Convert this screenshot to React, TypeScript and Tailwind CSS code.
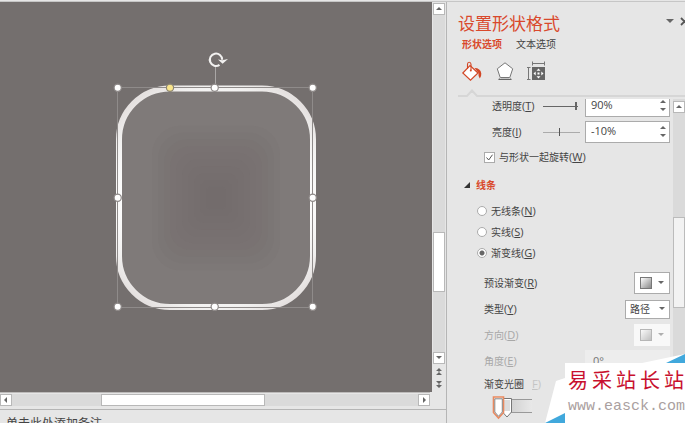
import { useState } from "react";
import type { ReactNode } from "react";

const HANDLES = [
  [118, 88], [215, 88], [313, 88],
  [118, 198], [313, 198],
  [118, 307], [215, 307], [313, 307],
];

// half sizes of the path gradient's steps
const STEPS = [64, 58, 52, 46, 40, 34, 28, 22, 16, 10];

function Arrow({ dir }: { dir: "up" | "down" | "left" | "right" }) {
  const points = {
    up: "0,4 3,1 6,4",
    down: "0,1 6,1 3,4",
    left: "4,0 4,6 1,3",
    right: "2,0 2,6 5,3",
  }[dir];
  return (
    <svg viewBox="0 0 6 6" className="size-1.5 shrink-0">
      <polygon points={points} fill="#666" />
    </svg>
  );
}

function DoubleArrow({ down = false }: { down?: boolean }) {
  return (
    <svg viewBox="0 0 8 8" className={down ? "size-2 rotate-180" : "size-2"}>
      <path d="M1 4 4 1 7 4ZM1 8 4 5 7 8Z" fill="#666" />
      <path d="M4 3V5" stroke="#666" />
    </svg>
  );
}

function ScrollButton({ dir }: { dir: "up" | "down" | "left" | "right" }) {
  return (
    <button
      aria-label={dir}
      className="flex size-3 shrink-0 items-center justify-center border border-[#b8b8b8] bg-white"
    >
      <Arrow dir={dir} />
    </button>
  );
}

function Slide() {
  return (
    <div className="relative min-w-0 flex-1 overflow-hidden bg-[#746f6e]">
      <svg viewBox="110 45 210 270" className="absolute top-[43px] left-[110px] h-[270px] w-[210px]">
        <defs>
          <radialGradient id="line" gradientUnits="userSpaceOnUse" cx="216" cy="198" r="150">
            <stop offset="0.6" stopColor="#fff" />
            <stop offset="0.74" stopColor="#f2f1f0" />
            <stop offset="0.84" stopColor="#e5e1e0" />
          </radialGradient>
        </defs>
        <rect x="119" y="88.5" width="194" height="218.5" rx="51" fill="#7f7a79" />
        {STEPS.map((s) => (
          <rect key={s} x={216 - s} y={198 - s * 1.13} width={s * 2} height={s * 2.26} rx={s * 0.45} fill="#706b6a" opacity="0.12" />
        ))}
        <rect x="119" y="88.5" width="194" height="218.5" rx="51" fill="none" stroke="url(#line)" strokeWidth="6" />
        <rect x="117.5" y="87.5" width="195" height="220" fill="none" stroke="#8f8b8a" />
        <path d="M215.5 67V84" stroke="#aaa7a6" />
        {HANDLES.map(([x, y]) => (
          <circle key={`${x}-${y}`} cx={x - 0.3} cy={y - 0.2} r="3.6" fill="#fff" stroke="#8d8887" strokeWidth="1.2" />
        ))}
        <circle cx="170" cy="87.8" r="3.6" fill="#f9e58c" stroke="#8d8674" strokeWidth="1.2" />
        <path d="M219.5 64.9A6.2 6.2 0 1 1 222.2 59.8" fill="none" stroke="#f2f1f0" strokeWidth="2.1" />
        <path d="M218 59.5 222.3 60.3 228 59 222.6 63.8Z" fill="#f2f1f0" />
      </svg>
    </div>
  );
}

function Editor() {
  return (
    <main className="flex min-w-0 flex-1 flex-col">
      <div className="flex min-h-0 flex-1">
        <Slide />
        <div className="flex w-3.5 flex-col items-center pt-px">
          <ScrollButton dir="up" />
          <div className="flex w-3 flex-1 flex-col bg-[#dadada]">
            <div className="flex-[218]" />
            <div className="flex-[58] border border-[#b8b8b8] bg-white" />
            <div className="flex-[60]" />
          </div>
          <ScrollButton dir="down" />
          <button aria-label="上一张幻灯片" className="flex h-3.5 items-center"><DoubleArrow /></button>
          <button aria-label="下一张幻灯片" className="flex h-3.5 items-center"><DoubleArrow down /></button>
        </div>
      </div>
      <div className="mr-4 flex h-3.5 items-center border-t border-[#bdbbba]">
        <ScrollButton dir="left" />
        <div className="flex h-3 flex-1 bg-[#dadada]">
          <div className="flex-[90]" />
          <div className="flex-[163] border border-[#b8b8b8] bg-white" />
          <div className="flex-[154]" />
        </div>
        <ScrollButton dir="right" />
      </div>
      <div className="mt-[3px] h-3.5 overflow-hidden border-t border-[#b5b5b5] px-1.5 pt-1.5">
        <textarea
          aria-label="备注"
          rows={1}
          placeholder="单击此处添加备注"
          className="block h-4 w-full resize-none overflow-hidden text-[12px] leading-4 outline-none placeholder:text-[#444]"
        />
      </div>
    </main>
  );
}

function Key({ children }: { children: string }) {
  return <span className="text-[11px]">(<u>{children}</u>)</span>;
}

function SpinBox({ id, value }: { id: string; value: string }) {
  return (
    <div className="ml-auto flex h-[22px] w-[85px] border border-[#ababab] bg-white">
      <input id={id} defaultValue={value} className="min-w-0 flex-1 pb-0.5 pl-[5px] text-[11px] outline-none" />
      <div className="flex w-3 flex-col items-center justify-evenly">
        <button aria-label="增加" className="flex"><Arrow dir="up" /></button>
        <button aria-label="减少" className="flex"><Arrow dir="down" /></button>
      </div>
    </div>
  );
}

function Radio({ value, current, onPick, children }: {
  value: string;
  current: string;
  onPick: (v: string) => void;
  children: ReactNode;
}) {
  return (
    <label className="flex h-[21px] items-center gap-1 pl-[30px]">
      <input
        type="radio"
        name="line"
        checked={current === value}
        onChange={() => onPick(value)}
        className="size-2.5 appearance-none rounded-full border border-[#ababab] bg-white checked:bg-[radial-gradient(#666_0_2px,#fff_3px)]"
      />
      <span>{children}</span>
    </label>
  );
}

function Swatch() {
  return (
    <>
      <span className="size-3 border border-[#777] bg-linear-to-br from-white to-[#8a8a8a]" />
      <Arrow dir="down" />
    </>
  );
}

function CategoryIcons() {
  return (
    <div className="mt-[9px] flex h-[22px] items-center gap-[11px] pl-3.5">
      <button aria-label="填充与线条">
        <svg viewBox="0 0 22 22" className="size-[22px]" fill="none" stroke="#d24726">
          <path d="M9 4.5 17 12 9.5 19.2 1.8 12Z" fill="#fff" strokeWidth="1.2" />
          <path d="M6.5 8V3.2Q6.5 1.2 8.2 1.2T10 3.2V9" strokeWidth="1.1" />
          <circle cx="9.8" cy="9.5" r="1" fill="#d24726" stroke="none" />
          <path d="M13.5 7Q19.5 7 20.3 12.5 20.5 15.5 18.8 17.5 17 15 17.5 12Z" fill="#d24726" stroke="none" />
        </svg>
      </button>
      <button aria-label="效果">
        <svg viewBox="0 0 22 22" className="size-[22px]" fill="none" stroke="#777">
          <path d="M11 1.8 18.7 7.8 15.8 16.5H6.2L3.3 7.8Z" fill="#fff" />
          <path d="M6.5 17.5H15.5" stroke="#c4c4c4" />
          <path d="M4.5 18.5H17.5" stroke="#666" />
          <path d="M6.2 16.5 4.5 18.5M15.8 16.5 17.5 18.5" stroke="#999" />
        </svg>
      </button>
      <button aria-label="大小与属性">
        <svg viewBox="0 0 22 22" className="size-[22px]" fill="none" stroke="#777">
          <path d="M5.5 2.5H17.5M5.5 0.5V4.5M17.5 0.5V4.5M1.5 6.5V18.5M0 6.5H3.5M0 18.5H3.5" />
          <rect x="5" y="6" width="13" height="13" fill="#666" stroke="none" />
          <path d="M11.5 7.5 13.5 9.7H9.5ZM11.5 17.5 13.5 15.3H9.5ZM6.5 12.5 8.7 10.5V14.5ZM16.5 12.5 14.3 10.5V14.5ZM10.5 11.5H12.5V13.5H10.5Z" fill="#fff" stroke="none" />
        </svg>
      </button>
    </div>
  );
}

function FormatPane() {
  const [line, setLine] = useState("gradient");

  return (
    <aside className="flex w-[239px] shrink-0 flex-col overflow-hidden border-l border-[#b5b5b5]">
      <header className="flex items-center pt-2.5 pl-[11px]">
        <h1 className="flex-1 text-[17px] leading-6 text-[#d9492c]">设置形状格式</h1>
        <button aria-label="窗格选项" className="mr-1.5 -mt-1.5">
          <svg viewBox="0 0 8 4" className="h-1 w-2"><path d="M0 0H8L4 4Z" fill="#666" /></svg>
        </button>
        <button aria-label="关闭" className="-mr-1 -mt-1.5">
          <svg viewBox="0 0 9 9" className="size-[9px]"><path d="M1 1 8 8M8 1 1 8" stroke="#555" strokeWidth="1.8" /></svg>
        </button>
      </header>
      <nav className="flex h-4 items-center gap-3.5 pl-[15px]">
        <button className="font-bold text-[#d9492c]">形状选项</button>
        <button>文本选项</button>
      </nav>
      <CategoryIcons />
      <div className="mt-1.5 flex h-2 items-end pl-[11px]">
        <div className="w-2 border-t-2 border-[#d6d6d6]" />
        <svg viewBox="0 0 12 8" className="h-2 w-3"><path d="M0 7H1L6 1.5 11 7H12" fill="none" stroke="#d6d6d6" strokeWidth="2" /></svg>
        <div className="flex-1 border-t-2 border-[#d6d6d6]" />
      </div>

      <div className="mt-0.5 flex min-h-0 flex-1 overflow-hidden">
        <div className="min-w-0 flex-1 overflow-hidden pr-[3px]">
          <div className="-mt-1.5 flex h-[26px] items-center pl-[45px]">
            <label htmlFor="alpha" className="w-[51px]">透明度<Key>T</Key></label>
            <input
              type="range"
              aria-label="透明度"
              defaultValue={90}
              className="h-2 w-[37px] appearance-none bg-[linear-gradient(#666,#666)] bg-size-[35px_1px] bg-left bg-no-repeat [&::-webkit-slider-thumb]:h-2 [&::-webkit-slider-thumb]:w-0.5 [&::-webkit-slider-thumb]:appearance-none [&::-webkit-slider-thumb]:bg-[#666]"
            />
            <SpinBox id="alpha" value="90%" />
          </div>
          <div className="flex h-[26px] items-center pl-[45px]">
            <label htmlFor="bright" className="w-[51px]">亮度<Key>I</Key></label>
            <input
              type="range"
              aria-label="亮度"
              min={-100}
              max={100}
              defaultValue={-10}
              className="h-2 w-[37px] appearance-none bg-[linear-gradient(#ababab,#ababab)] bg-size-[37px_1px] bg-left bg-no-repeat [&::-webkit-slider-thumb]:h-2 [&::-webkit-slider-thumb]:w-px [&::-webkit-slider-thumb]:appearance-none [&::-webkit-slider-thumb]:bg-[#555]"
            />
            <SpinBox id="bright" value="-10%" />
          </div>
          <label className="flex h-6 items-center gap-1 pl-[37px]">
            <span className="grid size-[11px] place-items-center">
              <input type="checkbox" defaultChecked className="col-start-1 row-start-1 size-[11px] appearance-none border border-[#ababab] bg-white" />
              <svg viewBox="0 0 11 11" className="pointer-events-none col-start-1 row-start-1 size-[11px]">
                <path d="M2.5 5.5 4.7 8 8.5 2.7" fill="none" stroke="#555" />
              </svg>
            </span>
            <span>与形状一起旋转<Key>W</Key></span>
          </label>
          <h2 className="flex h-[31px] items-center gap-1.5 pl-[17px] font-bold text-[#d9492c]">
            <svg viewBox="0 0 6 6" className="size-1.5"><path d="M6 0V6H0Z" fill="#333" /></svg>
            线条
          </h2>
          <Radio value="none" current={line} onPick={setLine}>无线条<Key>N</Key></Radio>
          <Radio value="solid" current={line} onPick={setLine}>实线<Key>S</Key></Radio>
          <Radio value="gradient" current={line} onPick={setLine}>渐变线<Key>G</Key></Radio>

          <div className="mt-[7px] flex h-[26px] items-center justify-between pl-[37px]">
            <span>预设渐变<Key>R</Key></span>
            <button aria-label="预设渐变" className="flex h-[22px] w-9 items-center justify-center gap-1.5 border border-[#ababab] bg-white">
              <Swatch />
            </button>
          </div>
          <div className="flex h-[26px] items-center justify-between pl-[37px]">
            <label htmlFor="type">类型<Key>Y</Key></label>
            <div className="grid h-[19px] w-[45px] items-center border border-[#ababab] bg-white">
              <select id="type" className="col-start-1 row-start-1 h-full w-full appearance-none pb-px pl-1 outline-none">
                <option>路径</option>
                <option>线性</option>
                <option>射线</option>
              </select>
              <span className="pointer-events-none col-start-1 row-start-1 mr-1 justify-self-end"><Arrow dir="down" /></span>
            </div>
          </div>
          <div className="flex h-[26px] items-center justify-between pl-[37px] text-[#a8a8a8]">
            <span>方向<Key>D</Key></span>
            <button disabled aria-label="方向" className="flex h-[22px] w-9 items-center justify-center gap-1.5 bg-[#f8f8f8]">
              <span className="flex items-center gap-1.5 opacity-50"><Swatch /></span>
            </button>
          </div>
          <div className="flex h-[26px] items-center justify-between pl-[37px] text-[#a8a8a8]">
            <label htmlFor="angle">角度<Key>E</Key></label>
            <input id="angle" disabled defaultValue="0°" className="h-[22px] w-[85px] bg-[#ededed] pb-0.5 pl-2 text-[11px] text-[#777]" />
          </div>
          <div className="flex h-5 items-center gap-2 pl-[37px]">
            <span>渐变光圈</span>
            <span className="text-[11px] text-[#c4c4c4]"><u>F</u>)</span>
          </div>
          <svg viewBox="0 0 42 26" className="mt-0.5 ml-[45px] h-[26px] w-[42px]">
            <defs>
              <linearGradient id="stops"><stop stopColor="#c4c4c4" /><stop offset="1" stopColor="#e8e8e8" /></linearGradient>
            </defs>
            <rect x="6" y="3" width="34" height="13" fill="url(#stops)" />
            <path d="M6 3.5H40M6 16.5H40" stroke="#999" />
            <path d="M10.5 2.5H19.5V16L15 21 10.5 16Z" fill="#fff" stroke="#777" />
            <rect x="12" y="4" width="6" height="11" fill="#ddd" />
            <path d="M1.5 1H11.5V16.5L6.5 22 1.5 16.5Z" fill="#fff" stroke="#e9895f" strokeWidth="1.6" />
            <path d="M2.8 2.8H10.3V16L6.5 20.3 2.8 16Z" fill="#fff" stroke="#777" strokeWidth="0.9" />
          </svg>
        </div>
        <div className="flex w-3 flex-col bg-[#dadada] pt-0.5">
          <ScrollButton dir="up" />
          <div className="flex-[105]" />
          <div className="flex-[89] border border-[#bbb] bg-[#f2f2f2]" />
          <div className="flex-[116]" />
        </div>
      </div>
    </aside>
  );
}

function SiteBadge() {
  return (
    <div className="absolute right-0 bottom-0 h-[70px] w-[140px]">
      <svg viewBox="0 0 140 70" className="absolute inset-0 size-full">
        <path d="M11 28 20 25V10H97L140 1V70H0Z" fill="#fff" />
        <path d="M121 10 140 1V10ZM0 70 20 60V70Z" fill="#41a8dc" />
      </svg>
      <div className="relative ml-5 flex flex-col pt-3.5 pl-[3px] whitespace-nowrap">
        <p className="flex gap-1 text-[20px] leading-7 text-[#c8102e]">
          {[..."易采站长站"].map((c, i) => <span key={i}>{c}</span>)}
        </p>
        <a href="#" className="font-['Liberation_Mono',monospace] text-[15px] leading-6 text-[#aaa0a0]">www.easck.com</a>
      </div>
    </div>
  );
}

export default function App() {
  return (
    <div className="relative flex h-screen flex-col overflow-hidden bg-[#e6e6e6] font-['Open_Sans','Noto_Sans_CJK_SC',sans-serif] text-[10px] leading-4 text-[#444]">
      <div className="h-0.5 shrink-0 border-b border-[#c6c6c6]" />
      <div className="flex min-h-0 flex-1">
        <Editor />
        <FormatPane />
      </div>
      <SiteBadge />
    </div>
  );
}
